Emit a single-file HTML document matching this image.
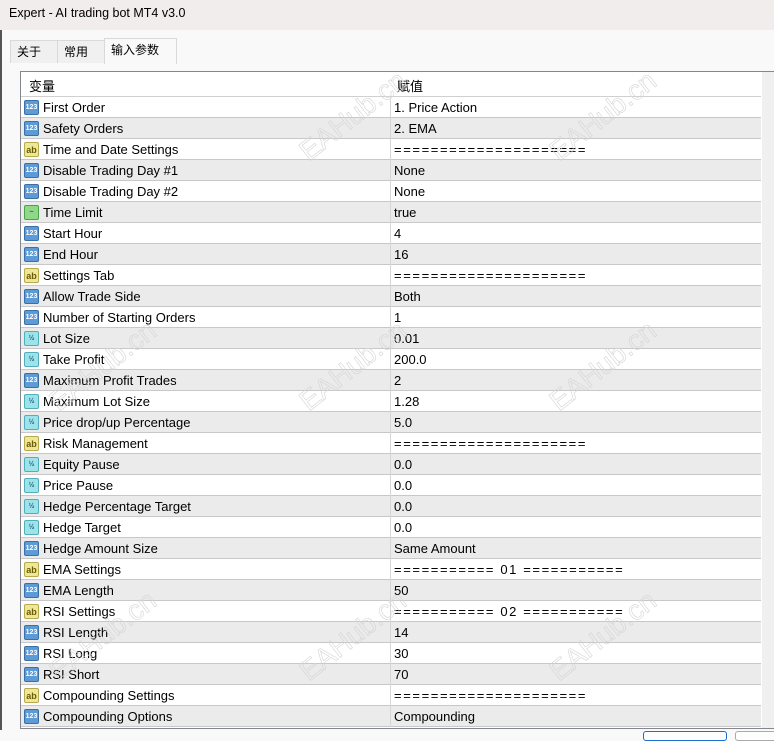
<!DOCTYPE html>
<html><head><meta charset="utf-8"><style>
*{margin:0;padding:0;box-sizing:border-box}
body{width:774px;height:735px;overflow:hidden;background:#f9f9f9;font-family:"Liberation Sans","Noto Sans CJK SC",sans-serif;font-size:13px;color:#000;position:relative}
.title{position:absolute;left:0;top:0;width:774px;height:30px;background:#f2eded;padding:6px 0 0 9px;font-size:12.5px}
.lb{position:absolute;left:0;top:30px;width:2px;height:700px;background:#555}
.tabs{position:absolute;top:38px;left:10px;height:25px;font-size:12px}
.tab{position:absolute;top:2px;height:23px;border:1px solid #d9d9d9;border-bottom:none;background:#f0f0f0;padding:2px 0 0 6px}
.tab.act{top:0;height:26px;background:#f9f9f9;padding-top:2px}
.frame{position:absolute;left:20px;top:71px;width:754px;height:658px;border:1px solid #828790;border-right:none;background:#fff;overflow:hidden}
.row{position:absolute;left:0;width:740px;height:21px;border-bottom:1px solid #c8c8c8}
.row.g{background:#ebebeb}
.row .n{position:absolute;left:22px;top:3px}
.row .v{position:absolute;left:373px;top:3px}
.row .v.eq{letter-spacing:1.6px}
.row .d{position:absolute;left:369px;top:0;width:1px;height:21px;background:#d6d6d6}
.ic{position:absolute;left:3px;top:3px;width:15px;height:15px;border-radius:2px;font-size:7px;line-height:14px;text-align:center;font-weight:bold}
.i1{background:#5d9bd6;color:#fff;border:1px solid #3a6fa8}
.i2{background:#ece89a;color:#6a5a00;border:1px solid #b9a94a;font-size:9px}
.i3{background:#9de3ea;color:#205f7a;border:1px solid #52aebd}
.i4{background:#8fd88a;color:#1f6b1f;border:1px solid #4aa34a}
.hdr{position:absolute;left:0;top:0;width:740px;height:25px;border-bottom:1px solid #d0d0d0}
.sb{position:absolute;left:741px;top:0;width:13px;height:658px;background:#f0f0f0}
.th{position:absolute;left:748px;top:19px;width:3px;height:344px;background:#8a8a8a;border-radius:2px}
.btn{position:absolute;top:731px;height:10px;border:1px solid #aaa;border-radius:3px;background:#fdfdfd}
.wm{position:absolute;font-size:28px;color:transparent;-webkit-text-stroke:0.6px #d4d4d4;transform:rotate(-38deg);font-family:"Liberation Sans",sans-serif}
</style></head><body>
<div class="title">Expert - AI trading bot MT4 v3.0</div>
<div class="lb"></div>
<div class="tabs">
<div class="tab" style="left:0;width:48px">关于</div>
<div class="tab" style="left:47px;width:48px">常用</div>
<div class="tab act" style="left:94px;width:73px">输入参数</div>
</div>
<div class="frame">
<div class="hdr"><span style="position:absolute;left:8px;top:4px">变量</span><span style="position:absolute;left:376px;top:4px">赋值</span></div>
<div id="rows"></div>
<div class="sb"><div class="th"></div></div>
</div>
<div class="btn" style="left:643px;width:84px;border-color:#1a6fd0"></div>
<div class="btn" style="left:735px;width:50px"></div>
<div class="wm" style="left:290px;top:100px">EAHub.cn</div>
<div class="wm" style="left:540px;top:100px">EAHub.cn</div>
<div class="wm" style="left:40px;top:350px">EAHub.cn</div>
<div class="wm" style="left:290px;top:350px">EAHub.cn</div>
<div class="wm" style="left:540px;top:350px">EAHub.cn</div>
<div class="wm" style="left:40px;top:620px">EAHub.cn</div>
<div class="wm" style="left:290px;top:620px">EAHub.cn</div>
<div class="wm" style="left:540px;top:620px">EAHub.cn</div>
<script>
var d=[[1,"First Order","1. Price Action"],[1,"Safety Orders","2. EMA"],[2,"Time and Date Settings","====================="],[1,"Disable Trading Day #1","None"],[1,"Disable Trading Day #2","None"],[4,"Time Limit","true"],[1,"Start Hour","4"],[1,"End Hour","16"],[2,"Settings Tab","====================="],[1,"Allow Trade Side","Both"],[1,"Number of Starting Orders","1"],[3,"Lot Size","0.01"],[3,"Take Profit","200.0"],[1,"Maximum Profit Trades","2"],[3,"Maximum Lot Size","1.28"],[3,"Price drop/up Percentage","5.0"],[2,"Risk Management","====================="],[3,"Equity Pause","0.0"],[3,"Price Pause","0.0"],[3,"Hedge Percentage Target","0.0"],[3,"Hedge Target","0.0"],[1,"Hedge Amount Size","Same Amount"],[2,"EMA Settings","=========== 01 ==========="],[1,"EMA Length","50"],[2,"RSI Settings","=========== 02 ==========="],[1,"RSI Length","14"],[1,"RSI Long","30"],[1,"RSI Short","70"],[2,"Compounding Settings","====================="],[1,"Compounding Options","Compounding"]];
var t={1:"123",2:"ab",3:"½",4:"~"},h="";
d.forEach(function(r,i){h+='<div class="row'+(i%2?' g':'')+'" style="top:'+(25+21*i)+'px"><div class="ic i'+r[0]+'">'+t[r[0]]+'</div><span class="n">'+r[1]+'</span><div class="d"></div><span class="v'+(r[2].indexOf('==')>=0?' eq':'')+'">'+r[2]+'</span></div>';});
document.getElementById("rows").innerHTML=h;
</script>
</body></html>
